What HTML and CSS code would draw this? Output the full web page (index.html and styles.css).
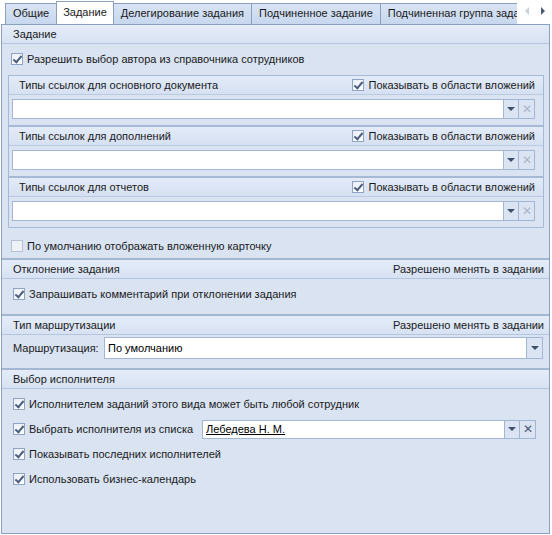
FILE: index.html
```
<!DOCTYPE html>
<html lang="ru">
<head>
<meta charset="utf-8">
<link rel="stylesheet" href="styles.css">
</head>
<body>
<div class="tabstrip">
  <div class="tabs">
    <div class="tab">Общие</div>
    <div class="tab active">Задание</div>
    <div class="tab">Делегирование задания</div>
    <div class="tab">Подчиненное задание</div>
    <div class="tab">Подчиненная группа заданий</div>
  </div>
  <div class="tabnav">
    <span class="arr arr-left"></span>
    <span class="arr arr-right"></span>
  </div>
</div>
<div class="panel">
  <div class="section s1">
    <div class="sec-head"><span>Задание</span></div>
    <div class="sec-body">
      <label class="check"><span class="cb on"></span><span>Разрешить выбор автора из справочника сотрудников</span></label>
      <div class="groups">
        <div class="group">
          <div class="group-head"><span>Типы ссылок для основного документа</span><label class="check"><span class="cb on"></span><span>Показывать в области вложений</span></label></div>
          <div class="group-body">
            <div class="field"><div class="input"></div><div class="btn drop"><span class="tri"></span></div><div class="btn clear dim">✕</div></div>
          </div>
        </div>
        <div class="group">
          <div class="group-head"><span>Типы ссылок для дополнений</span><label class="check"><span class="cb on"></span><span>Показывать в области вложений</span></label></div>
          <div class="group-body">
            <div class="field"><div class="input"></div><div class="btn drop"><span class="tri"></span></div><div class="btn clear dim">✕</div></div>
          </div>
        </div>
        <div class="group">
          <div class="group-head"><span>Типы ссылок для отчетов</span><label class="check"><span class="cb on"></span><span>Показывать в области вложений</span></label></div>
          <div class="group-body">
            <div class="field"><div class="input"></div><div class="btn drop"><span class="tri"></span></div><div class="btn clear dim">✕</div></div>
          </div>
        </div>
      </div>
      <label class="check last"><span class="cb"></span><span>По умолчанию отображать вложенную карточку</span></label>
    </div>
  </div>
  <div class="section s2">
    <div class="sec-head"><span>Отклонение задания</span><span>Разрешено менять в задании</span></div>
    <div class="sec-body">
      <label class="check wide"><span class="cb on"></span><span>Запрашивать комментарий при отклонении задания</span></label>
    </div>
  </div>
  <div class="section s3">
    <div class="sec-head"><span>Тип маршрутизации</span><span>Разрешено менять в задании</span></div>
    <div class="sec-body route">
      <span class="lbl">Маршрутизация:</span>
      <div class="field tall"><div class="input"><span>По умолчанию</span></div><div class="btn drop"><span class="tri"></span></div></div>
    </div>
  </div>
  <div class="section s4">
    <div class="sec-head"><span>Выбор исполнителя</span></div>
    <div class="sec-body rows">
      <label class="check wide"><span class="cb on"></span><span>Исполнителем заданий этого вида может быть любой сотрудник</span></label>
      <div class="row-pick">
        <label class="check wide"><span class="cb on"></span><span>Выбрать исполнителя из списка</span></label>
        <div class="field pick"><div class="input"><span class="link">Лебедева Н. М.</span></div><div class="btn drop"><span class="tri"></span></div><div class="btn clear">✕</div></div>
      </div>
      <label class="check wide"><span class="cb on"></span><span>Показывать последних исполнителей</span></label>
      <label class="check wide"><span class="cb on"></span><span>Использовать бизнес-календарь</span></label>
    </div>
  </div>
</div>
</body>
</html>
```
FILE: styles.css
```
* { box-sizing: border-box; }
html, body { margin: 0; padding: 0; }
body {
  width: 552px;
  height: 535px;
  overflow: hidden;
  background: #ffffff;
  font-family: "Liberation Sans", Arial, sans-serif;
  font-size: 11px;
  color: #1a1a1a;
}

/* tabs */
.tabstrip {
  display: flex;
  height: 24px;
  padding-left: 5px;
  position: relative;
  z-index: 2;
}
.tabs {
  display: flex;
  align-items: flex-end;
  flex: 1;
  overflow: hidden;
  white-space: nowrap;
}
.tab {
  height: 21px;
  line-height: 19px;
  padding: 0 7px;
  border: 1px solid #8ba0bc;
  border-bottom: none;
  margin-right: -1px;
  background: linear-gradient(#d9e4f4, #c7d7ee);
  color: #1a1a1a;
  flex: none;
}
.tab.active {
  height: 24px;
  line-height: 21px;
  background: #ffffff;
  position: relative;
  z-index: 1;
  margin-bottom: -1px;
  padding: 0 6px;
}
.tabnav {
  width: 35px;
  flex: none;
  display: flex;
  align-items: center;
  justify-content: space-between;
  padding: 0 7px 2px 8px;
  background: #ffffff;
}
.arr {
  width: 0;
  height: 0;
  border-top: 4px solid transparent;
  border-bottom: 4px solid transparent;
}
.arr-left { border-right: 4px solid #c8d0dc; }
.arr-right { border-left: 4px solid #4a5a75; }

/* panel */
.panel {
  margin: 0 2px 0 1px;
  height: 510px;
  border: 1px solid #8ba0bc;
  background: #d9e3f2;
  display: flex;
  flex-direction: column;
}
.section + .section { border-top: 2px solid #a3b7d3; }
.sec-head {
  height: 19px;
  display: flex;
  align-items: center;
  justify-content: space-between;
  padding: 0 5px 0 11px;
  background: linear-gradient(#e4ecf8, #d7e2f3);
  border-bottom: 1px solid #b4c6df;
}
.sec-body { padding: 7px 5px 4px 6px; }

.check {
  display: flex;
  align-items: center;
  height: 16px;
  white-space: nowrap;
}
.cb {
  width: 12px;
  height: 12px;
  border: 1px solid #8fa4c2;
  background: linear-gradient(135deg, #e9eef6, #ffffff);
  margin: 0 4px 0 3px;
  flex: none;
  position: relative;
}
.cb.on::after {
  content: "";
  position: absolute;
  left: 3px;
  top: 0px;
  width: 3px;
  height: 7px;
  border-right: 2px solid #4b5f80;
  border-bottom: 2px solid #4b5f80;
  transform: rotate(40deg);
}
.cb:not(.on) { border-color: #b5c2d5; background: #eef2f8; }

/* groups */
.groups { margin-top: 8px; }
.group {
  height: 51px;
  border: 1px solid #a7bad5;
  background: #d9e3f2;
}
.group-head {
  height: 19px;
  display: flex;
  align-items: center;
  justify-content: space-between;
  padding: 0 8px 0 10px;
  background: linear-gradient(#e3ebf8, #d5e0f2);
  border-bottom: 1px solid #b9cae1;
}
.group-head .cb { margin: 0 4px 0 0; }
.group-body { padding: 4px 8px 0 3px; }

.field {
  display: flex;
  height: 20px;
}
.input {
  flex: 1;
  background: #ffffff;
  border: 1px solid #a3b6d2;
  display: flex;
  align-items: center;
  padding-left: 3px;
  color: #000;
}
.btn {
  width: 15px;
  flex: none;
  border: 1px solid #a3b6d2;
  border-left: none;
  background: #dbe4f2;
  display: flex;
  align-items: center;
  justify-content: center;
  font-size: 12px;
  color: #4d5c75;
}
.btn.clear { width: 16px; }
.btn.dim { color: #a9b7ca; }
.tri {
  width: 0;
  height: 0;
  border-left: 4px solid transparent;
  border-right: 4px solid transparent;
  border-top: 4px solid #3f506c;
}

.check.last { margin-top: 10px; }

.s2 .sec-body { padding: 7px 5px 12px 8px; }

.route {
  display: flex;
  align-items: center;
  padding: 2px 6px 9px 11px;
}
.route .lbl { width: 91px; flex: none; }
.field.tall { flex: 1; height: 22px; }
.field.tall .btn { width: 16px; }

.s4 { flex: 1; }
.rows {
  display: flex;
  flex-direction: column;
  gap: 9px;
  padding: 7px 13px 0 8px;
}
.row-pick {
  display: flex;
  align-items: center;
  height: 16px;
}
.row-pick .check { width: 192px; flex: none; }
.field.pick { flex: 1; height: 19px; }
.link { text-decoration: underline; }
```
